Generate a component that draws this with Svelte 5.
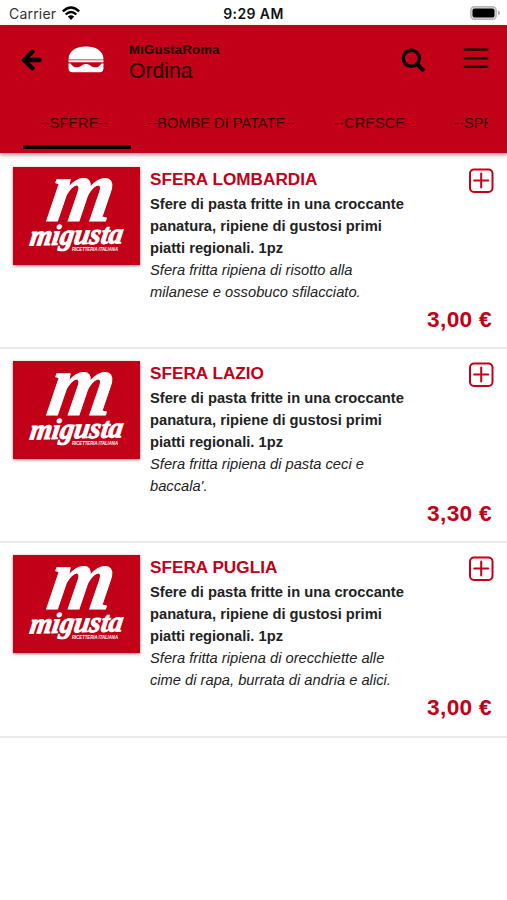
<script lang="ts">
  interface Product {
    id: number;
    name: string;
    note: string;
    price: string;
  }

  const categories = ['--SFERE--', '--BOMBE DI PATATE--', '--CRESCE--', '--SPECIAL--'];
  const description = 'Sfere di pasta fritte in una croccante panatura, ripiene di gustosi primi piatti regionali. 1pz';

  const products: Product[] = [
    { id: 1, name: 'SFERA LOMBARDIA', note: 'Sfera fritta ripiena di risotto alla milanese e ossobuco sfilacciato.', price: '3,00 €' },
    { id: 2, name: 'SFERA LAZIO', note: "Sfera fritta ripiena di pasta ceci e baccala'.", price: '3,30 €' },
    { id: 3, name: 'SFERA PUGLIA', note: 'Sfera fritta ripiena di orecchiette alle cime di rapa, burrata di andria e alici.', price: '3,00 €' },
  ];

  let active = $state(0);
  let cart = $state<number[]>([]);

  function addToCart(id: number) {
    cart.push(id);
  }
</script>

<div class="status-bar">
  <div class="carrier">
    <span>Carrier</span>
    <svg width="18" height="14" viewBox="0 0 18 14" fill="none" stroke="#000" stroke-width="2.4">
      <path d="M0.8 5.4Q9 -2.6 17.2 5.4" />
      <path d="M3.7 8.5Q9 3.4 14.3 8.5" />
      <path d="M9 14L5.8 10.6Q9 7.8 12.2 10.6Z" fill="#000" stroke="none" />
    </svg>
  </div>
  <span class="time">9:29 AM</span>
  <svg class="battery" width="31" height="14" viewBox="0 0 31 14">
    <rect x="0.8" y="0.8" width="25.4" height="12.4" rx="3.6" fill="#ddd" stroke="#b5b5b5" stroke-width="1.4" />
    <rect x="2.5" y="2.5" width="22" height="9" rx="2" />
    <path d="M28 4.6Q30 5.4 30 7T28 9.4Z" fill="#aaa" />
  </svg>
</div>

<header>
  <div class="toolbar">
    <button class="back" aria-label="Indietro">
      <svg width="21" height="22" viewBox="0 0 21 22" fill="none" stroke="#000" stroke-width="4.4">
        <path d="M11.4 2.8L3 11L11.4 19.2" stroke-linejoin="round" stroke-linecap="round" />
        <path d="M4 11H18.6" stroke-linecap="round" />
      </svg>
    </button>
    <svg class="burger" width="36" height="27" viewBox="0 0 36 27" fill="#fff">
      <path d="M0.5 13.4C0.5 5 8 0.5 18 0.5S35.5 5 35.5 13.4Z" />
      <path d="M0.5 14.3H35.5V16.3H0.5Z" />
      <path d="M0.5 17.4H2.5C6 22.6 10.5 22 14 19.2Q18 16.6 22 19.2C25.5 22 30 22.6 33.5 17.4H35.5V22Q35.5 26.2 31.5 26.2H4.5Q0.5 26.2 0.5 22Z" />
    </svg>
    <div class="heading">
      <strong>MiGustaRoma</strong>
      <span>Ordina</span>
    </div>
    <button class="search" aria-label="Cerca">
      <svg width="24" height="24" viewBox="0 0 24 24" fill="none" stroke="#000" stroke-width="3.4">
        <circle cx="10.3" cy="10.3" r="8" />
        <path d="M16 16L21.6 21.6" stroke-width="4" stroke-linecap="round" />
      </svg>
    </button>
    <button class="menu" aria-label="Menu">
      <svg width="26" height="22" viewBox="0 0 26 22" stroke="#210003" stroke-width="2.4" stroke-linecap="round">
        <path d="M1.8 2.5H24.2M1.8 11.2H24.2M1.8 19.7H24.2" />
      </svg>
    </button>
  </div>
  <nav>
    {#each categories as category, i}
      <button class:active={i === active} onclick={() => (active = i)}>{category}</button>
    {/each}
  </nav>
</header>

<main>
  {#each products as product (product.id)}
    <article>
      <svg class="logo" width="127" height="98" viewBox="0 0 127 98" role="img" aria-label="migusta">
        <g transform="translate(32 54) skewX(-10)">
          <text class="script" font-size="90" textLength="65" lengthAdjust="spacingAndGlyphs">m</text>
        </g>
        <g transform="translate(16 78.5) rotate(-1.5) skewX(-10)">
          <text class="script" font-size="29" textLength="93" lengthAdjust="spacingAndGlyphs">migusta</text>
        </g>
        <text class="tagline" x="59" y="83.5" textLength="46" lengthAdjust="spacingAndGlyphs">RICETTERIA ITALIANA</text>
      </svg>
      <div class="info">
        <h2>{product.name}</h2>
        <p class="description">{description}</p>
        <p class="note">{product.note}</p>
      </div>
      <div class="side">
        <button class="add" aria-label="Aggiungi" onclick={() => addToCart(product.id)}>
          <svg width="26" height="26" viewBox="0 0 26 26" fill="none" stroke="#c20017" stroke-width="2">
            <rect x="2" y="2.5" width="22.5" height="22.5" rx="4" />
            <path d="M13.2 6.5V20.5M6.2 13.5H20.2" stroke-linecap="round" />
          </svg>
        </button>
        <span class="price">{product.price}</span>
      </div>
    </article>
  {/each}
</main>

<style>
  :global(body) {
    background: #fff;
    font-family: "Liberation Sans", Arial, sans-serif;
    color: #222;
  }
  button {
    border: 0;
    padding: 0;
    background: none;
    font: inherit;
    color: inherit;
    cursor: pointer;
  }
  svg {
    display: block;
    flex: none;
  }

  .status-bar {
    display: grid;
    grid-template-columns: 1fr auto 1fr;
    align-items: center;
    height: 25px;
    padding: 2px 6px 0 9px;
    box-sizing: border-box;
    font-family: Inter, sans-serif;
    font-size: 14px;
  }
  .carrier {
    display: flex;
    align-items: center;
    gap: 6px;
    color: #333;
    letter-spacing: 0.2px;
  }
  .carrier svg {
    margin-top: -2px;
  }
  .time {
    margin-right: 3px;
    font-weight: 600;
    letter-spacing: 0.4px;
    color: #111;
  }
  .battery {
    justify-self: end;
    margin-top: -2px;
  }

  header {
    position: relative;
    height: 128px;
    background: #c20017;
    box-shadow: 0 2px 4px rgba(0, 0, 0, 0.4);
    color: #210003;
  }
  .toolbar {
    display: flex;
    height: 74px;
    padding: 0 18px 0 21px;
    align-items: flex-start;
  }
  .back {
    margin-top: 24px;
  }
  .burger {
    margin: 21px 0 0 26px;
  }
  .heading {
    display: flex;
    flex-direction: column;
    margin: 17px auto 0 25px;
  }
  .heading strong {
    font-size: 13px;
    line-height: 16px;
    letter-spacing: 0.3px;
  }
  .heading span {
    font-size: 21.2px;
    line-height: 25px;
  }
  .search {
    margin-top: 23px;
  }
  .menu {
    margin: 22px 0 0 38px;
  }
  nav {
    display: flex;
    margin: 0 19px 0 23px;
    height: 50px;
    overflow: hidden;
  }
  nav button {
    flex: none;
    padding: 2px 22.5px 0 17px;
    border-bottom: 4px solid transparent;
    font-size: 14.6px;
    color: #350006;
    white-space: nowrap;
  }
  nav button.active {
    border-color: #0b0001;
  }

  main {
    padding-top: 2px;
  }
  article {
    display: flex;
    height: 194.2px;
    padding: 12px 13px 0;
    box-sizing: border-box;
    border-bottom: 2px solid #ebebeb;
  }
  .logo {
    overflow: visible;
    background: #c20017;
    box-shadow: 0 1px 3px rgba(0, 0, 0, 0.45);
  }
  .script {
    font-family: "Liberation Serif", serif;
    font-weight: bold;
    font-style: italic;
    fill: #fff;
    stroke: #fff;
    stroke-width: 1;
  }
  .tagline {
    font-size: 5px;
    font-weight: bold;
    font-style: italic;
    fill: #fff;
  }
  .info {
    width: 257px;
    margin-left: 10px;
    font-size: 14.7px;
    line-height: 22px;
  }
  h2 {
    margin: 1px 0 2px;
    font-size: 17.2px;
    line-height: 23px;
    color: #c20017;
  }
  p {
    margin: 0;
  }
  .description {
    font-weight: bold;
  }
  .note {
    font-style: italic;
  }
  .side {
    flex: 1;
    display: flex;
    flex-direction: column;
    align-items: flex-end;
    white-space: nowrap;
  }
  .price {
    margin: 112px 2px 0 0;
    font-size: 22.7px;
    line-height: 28px;
    font-weight: bold;
    letter-spacing: 0.3px;
    color: #c20017;
  }
</style>
